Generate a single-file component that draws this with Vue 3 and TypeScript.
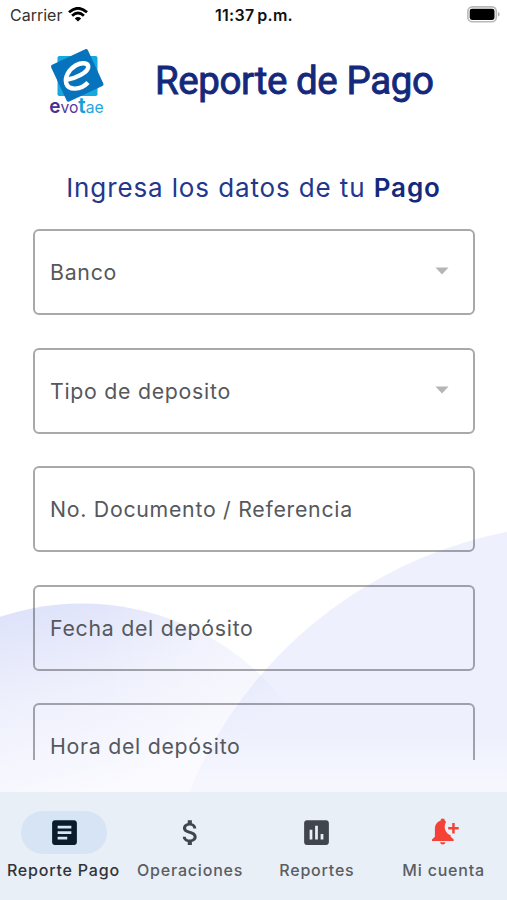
<script setup lang="ts">
interface Field {
  label: string
  select: boolean
}

interface Tab {
  label: string
  icon: 'article' | 'money' | 'chart' | 'bell'
  active?: boolean
}

const fields: Field[] = [
  { label: 'Banco', select: true },
  { label: 'Tipo de deposito', select: true },
  { label: 'No. Documento / Referencia', select: false },
  { label: 'Fecha del depósito', select: false },
  { label: 'Hora del depósito', select: false },
]

const tabs: Tab[] = [
  { label: 'Reporte Pago', icon: 'article', active: true },
  { label: 'Operaciones', icon: 'money' },
  { label: 'Reportes', icon: 'chart' },
  { label: 'Mi cuenta', icon: 'bell' },
]
</script>

<template>
  <div class="screen">
    <svg class="backdrop" viewBox="0 0 507 900" aria-hidden="true">
      <defs>
        <linearGradient id="leftFade" gradientUnits="userSpaceOnUse" x1="50" y1="603" x2="100" y2="792">
          <stop offset="0" stop-color="#dfe3fa" />
          <stop offset="0.45" stop-color="#eef0fc" />
          <stop offset="1" stop-color="#fafaff" />
        </linearGradient>
        <linearGradient id="rightFade" gradientUnits="userSpaceOnUse" x1="0" y1="530" x2="0" y2="800">
          <stop offset="0" stop-color="#eef0fd" />
          <stop offset="0.75" stop-color="#eef0fd" />
          <stop offset="1" stop-color="#f8f9ff" />
        </linearGradient>
        <linearGradient id="overlap" gradientUnits="userSpaceOnUse" x1="235" y1="670" x2="262" y2="735">
          <stop offset="0" stop-color="#dfe5fc" stop-opacity="0.8" />
          <stop offset="1" stop-color="#eef0fd" stop-opacity="0" />
        </linearGradient>
        <linearGradient id="leftLight" gradientUnits="userSpaceOnUse" x1="100" y1="0" x2="270" y2="0">
          <stop offset="0" stop-color="#fcfcff" stop-opacity="0" />
          <stop offset="1" stop-color="#fcfcff" stop-opacity="0.45" />
        </linearGradient>
        <clipPath id="rightClip"><circle cx="589.5" cy="957" r="433" /></clipPath>
      </defs>
      <circle cx="82" cy="862" r="258.5" fill="url(#leftFade)" />
      <circle cx="82" cy="862" r="258.5" fill="url(#leftLight)" />
      <circle cx="589.5" cy="957" r="433" fill="url(#rightFade)" />
      <circle cx="82" cy="862" r="258.5" fill="url(#overlap)" clip-path="url(#rightClip)" />
    </svg>

    <div class="status">
      <div class="carrier">
        <span>Carrier</span>
        <svg width="20" height="15" viewBox="0 0 20 15">
          <g fill="none" stroke="#000" stroke-width="2.8">
            <path d="M1 5.3Q10-2.7 19 5.3" />
            <path d="M4.1 8.7Q10 3.4 15.9 8.7" />
          </g>
          <path d="M10 14.6 6.8 11.4Q10 8.7 13.2 11.4Z" />
        </svg>
      </div>
      <span class="clock">11:37<i></i>p.m.</span>
      <svg class="battery" width="33" height="17" viewBox="0 0 33 17">
        <rect x="0.9" y="0.9" width="28.4" height="14.8" rx="4.4" fill="#fff" stroke="#b9b9b9" stroke-width="1.6" />
        <rect x="2.7" y="2.7" width="24.8" height="11.2" rx="2.3" />
        <path d="M31 6q1.6.6 1.6 2.3T31 10.6Z" fill="#b0b0b0" />
      </svg>
    </div>

    <header class="header">
      <svg class="logo" width="60" height="70" viewBox="0 0 60 70">
        <rect x="10.5" y="8" width="40" height="40" rx="1.8" fill="#16a9df" />
        <rect x="10" y="7.2" width="40.500" height="40.500" rx="2" fill="#0873bd" transform="rotate(-25 30.2 27.4)" />
        <path
          d="M20.500 31.500C28 30.500 41.500 24.500 41.300 18.500C40.800 14.500 34.500 14.200 29 17.200C21.500 21.500 17.500 29.500 19.300 35.500C21.500 42.500 33.500 42.500 41 34.500"
          fill="none"
          stroke="#fff"
          stroke-width="4.4"
        />
        <text x="2.2" y="65.3" font-size="16.500" fill="#563b9e" textLength="54.500" lengthAdjust="spacingAndGlyphs"><tspan font-size="20" font-weight="600" fill="#482f95">e</tspan>vo<tspan font-size="22" font-weight="600" fill="#11a0d8">t</tspan><tspan fill="#22a8dc">ae</tspan></text>
      </svg>
      <h1>Reporte de Pago</h1>
    </header>

    <p class="intro">Ingresa los datos de tu <b>Pago</b></p>

    <main class="form">
      <div v-for="field in fields" :key="field.label" class="field">
        <span>{{ field.label }}</span>
        <svg v-if="field.select" width="14" height="8" viewBox="0 0 14 8"><path d="M0.5 0.5h13L7 7.5Z" fill="#b5b5b5" /></svg>
      </div>
    </main>

    <nav class="tabs">
      <div v-for="tab in tabs" :key="tab.label" class="tab" :class="{ active: tab.active }">
        <div class="pill">
          <svg v-if="tab.icon === 'article'" width="33" height="33" viewBox="0 0 24 24">
            <path d="M19 3H5c-1.1 0-2 .9-2 2v14c0 1.1.9 2 2 2h14c1.1 0 2-.9 2-2V5c0-1.1-.9-2-2-2zm-5 14H7v-2h7v2zm3-4H7v-2h10v2zm0-4H7V7h10v2z" />
          </svg>
          <svg v-else-if="tab.icon === 'money'" width="33" height="33" viewBox="0 0 24 24">
            <path d="M11.8 10.9c-2.27-.59-3-1.2-3-2.15 0-1.09 1.01-1.85 2.7-1.85 1.78 0 2.44.85 2.5 2.1h2.21c-.07-1.72-1.12-3.3-3.21-3.81V3h-3v2.16c-1.94.42-3.5 1.68-3.5 3.61 0 2.31 1.91 3.46 4.7 4.13 2.5.6 3 1.48 3 2.41 0 .69-.49 1.79-2.7 1.79-2.06 0-2.87-.92-2.98-2.1h-2.2c.12 2.19 1.76 3.42 3.68 3.83V21h3v-2.15c1.95-.37 3.5-1.5 3.5-3.55 0-2.84-2.43-3.81-4.7-4.4z" />
          </svg>
          <svg v-else-if="tab.icon === 'chart'" width="33" height="33" viewBox="0 0 24 24">
            <path d="M19 3H5c-1.1 0-2 .9-2 2v14c0 1.1.9 2 2 2h14c1.1 0 2-.9 2-2V5c0-1.1-.9-2-2-2zM9 17H7v-7h2v7zm4 0h-2V7h2v10zm4 0h-2v-4h2v4z" />
          </svg>
          <svg v-else class="bell" width="33" height="33" viewBox="0 0 33 33">
            <path d="M15.700 2.500a2.200 2.200 0 0 0-2.200 2.300C9.500 6 7.900 9.200 7.900 13.200V20.800L5 23.500V25H26.700V23.500L23.700 20.800V19.300A9 9 0 0 1 19.100 6A8 8 0 0 0 17.900 4.800 2.200 2.200 0 0 0 15.700 2.500ZM13 26.300H18.500A2.800 2.800 0 0 1 13 26.300Z" />
            <path d="M25.200 7h2.500v4h4v2.500h-4v4h-2.500v-4h-4v-2.500h4Z" />
          </svg>
        </div>
        <span>{{ tab.label }}</span>
      </div>
    </nav>
  </div>
</template>

<style>
body {
  margin: 0;
  background: #fff;
}
</style>

<style scoped>
.screen {
  position: relative;
  display: flex;
  flex-direction: column;
  width: 507px;
  height: 900px;
  overflow: hidden;
  font-family: Inter, sans-serif;
  background: #fff;
}
.backdrop {
  position: absolute;
  inset: 0;
}
.status,
.header,
.intro,
.form,
.tabs {
  position: relative;
}
.status {
  display: grid;
  grid-template-columns: 1fr auto 1fr;
  align-items: center;
  height: 30px;
  padding: 0 9px 0 10px;
  color: #111;
  font-size: 16px;
}
.carrier {
  display: flex;
  align-items: center;
  gap: 6px;
  color: #333;
  letter-spacing: 0;
}
.carrier svg {
  margin-top: -2px;
}
.clock {
  font-weight: 600;
  letter-spacing: 0.25px;
}
.clock i {
  display: inline-block;
  width: 3px;
}
.battery {
  justify-self: end;
  margin: -2px -2px 0 0;
}
.header {
  display: flex;
  height: 130px;
  flex: none;
}
.logo {
  margin: 18px 0 0 47px;
  flex: none;
}
h1 {
  margin: 28px 0 0 48px;
  color: #15297c;
  font: 400 38.5px/46px Roboto, sans-serif;
  letter-spacing: -0.4px;
  -webkit-text-stroke: 0.9px #15297c;
  white-space: nowrap;
}
.intro {
  margin: 8px 0 0;
  height: 61px;
  flex: none;
  color: #23378c;
  font-size: 26px;
  line-height: 39px;
  letter-spacing: 0.88px;
  text-align: center;
  white-space: nowrap;
}
.intro b {
  color: #15297c;
  font-weight: 600;
}
.form {
  display: flex;
  flex-direction: column;
  gap: 32.6px;
  height: 531px;
  padding: 0 32px 0 33px;
  flex: none;
  overflow: hidden;
}
.field {
  display: flex;
  box-sizing: border-box;
  align-items: center;
  justify-content: space-between;
  height: 86px;
  flex: none;
  padding: 0 24px 0 15px;
  border: 2px solid rgba(50, 50, 55, 0.42);
  border-radius: 6px;
  color: #55585d;
  font-size: 21.3px;
  letter-spacing: 0.72px;
}
.field svg {
  margin-top: -2px;
}
.tabs {
  display: grid;
  grid-template-columns: repeat(4, 1fr);
  height: 108px;
  margin-top: auto;
  background: #e9eff7;
}
.tab {
  display: flex;
  flex-direction: column;
  align-items: center;
  padding: 19px 0 0;
  color: #5a5d63;
  font-size: 16px;
  font-weight: 500;
  line-height: 20px;
  letter-spacing: 0.8px;
  white-space: nowrap;
}
.tab span {
  margin-top: 6px;
}
.pill {
  display: flex;
  align-items: center;
  justify-content: center;
  width: 86px;
  height: 43px;
  border-radius: 22px;
  fill: #41454d;
}
.active {
  color: #30343a;
}
.active .pill {
  background: #d7e4f6;
  fill: #0b1b2b;
  margin-left: 2px;
}
.bell {
  fill: #f44336;
}
</style>
